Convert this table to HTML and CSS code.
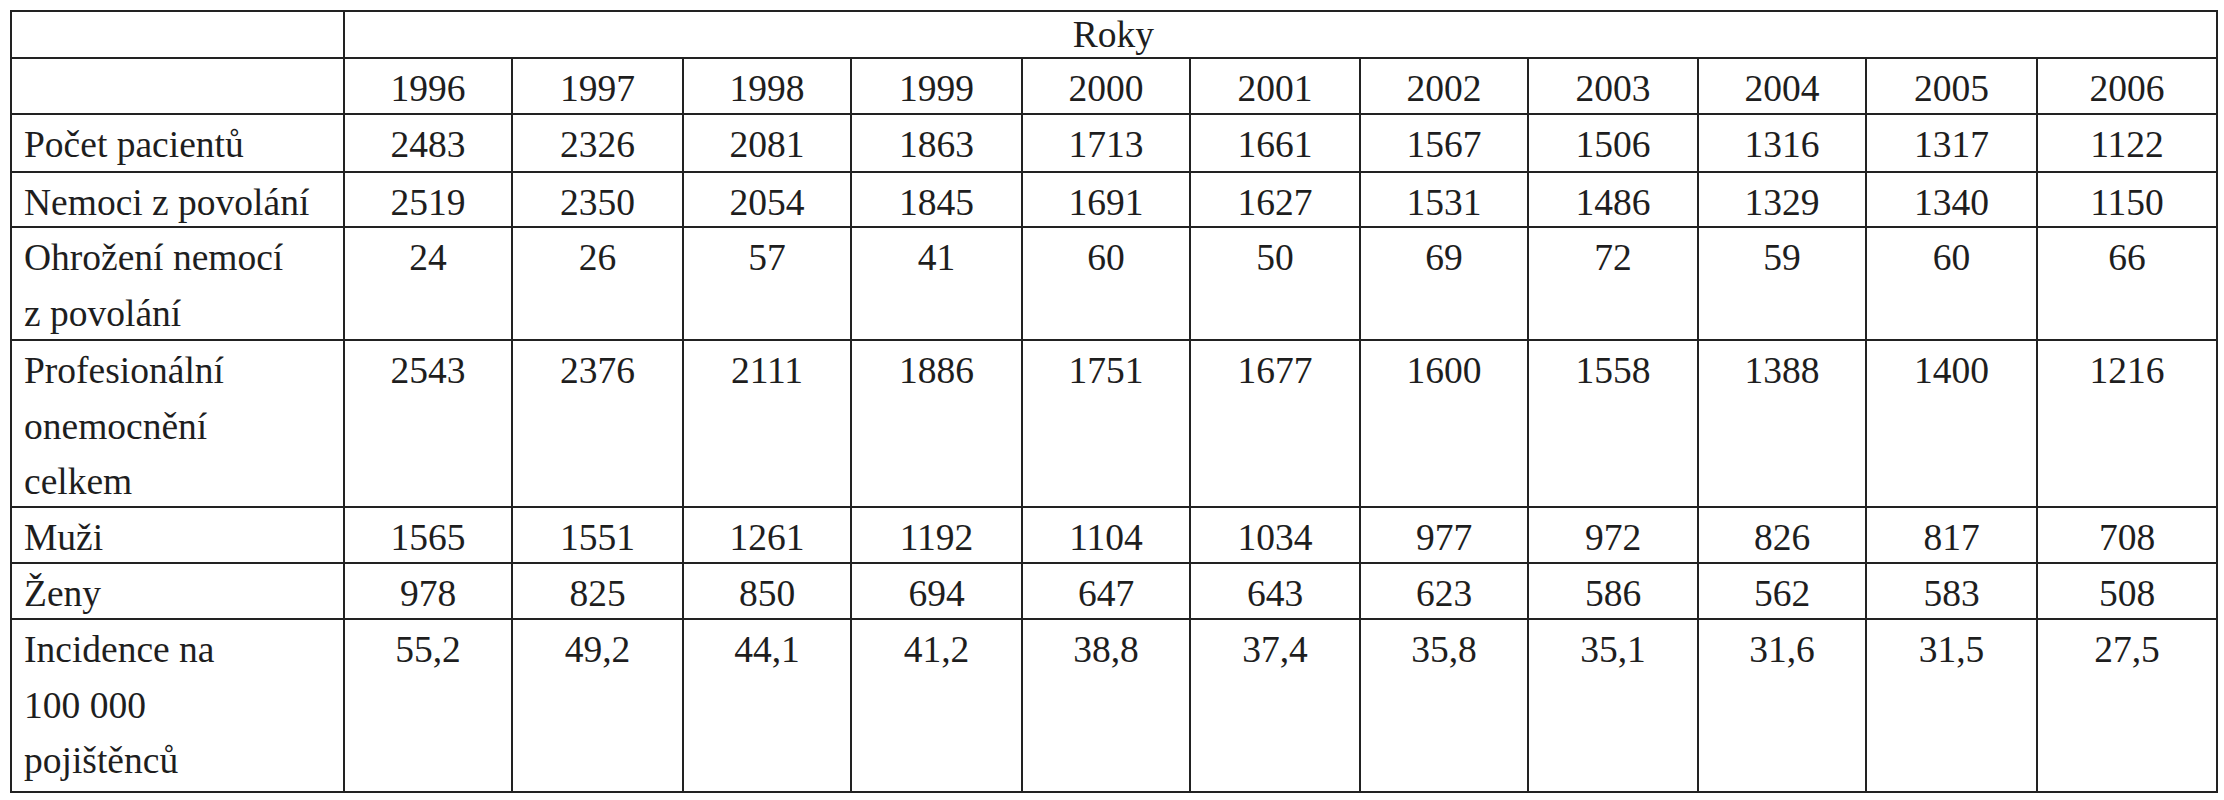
FILE: index.html
```html
<!DOCTYPE html>
<html lang="cs">
<head>
<meta charset="utf-8">
<title>Profesionální onemocnění 1996–2006</title>
<link rel="stylesheet" href="styles.css">
</head>
<body>
<div class="page">
  <div class="grid">
    <div class="cell"></div>
    <div class="cell span roky">Roky</div>

    <div class="cell"></div>
    <div class="cell num">1996</div><div class="cell num">1997</div><div class="cell num">1998</div><div class="cell num">1999</div><div class="cell num">2000</div><div class="cell num">2001</div><div class="cell num">2002</div><div class="cell num">2003</div><div class="cell num">2004</div><div class="cell num">2005</div><div class="cell num">2006</div>

    <div class="cell label">Počet pacientů</div>
    <div class="cell num">2483</div><div class="cell num">2326</div><div class="cell num">2081</div><div class="cell num">1863</div><div class="cell num">1713</div><div class="cell num">1661</div><div class="cell num">1567</div><div class="cell num">1506</div><div class="cell num">1316</div><div class="cell num">1317</div><div class="cell num">1122</div>

    <div class="cell label">Nemoci z povolání</div>
    <div class="cell num">2519</div><div class="cell num">2350</div><div class="cell num">2054</div><div class="cell num">1845</div><div class="cell num">1691</div><div class="cell num">1627</div><div class="cell num">1531</div><div class="cell num">1486</div><div class="cell num">1329</div><div class="cell num">1340</div><div class="cell num">1150</div>

    <div class="cell label">Ohrožení nemocí<br>z povolání</div>
    <div class="cell num">24</div><div class="cell num">26</div><div class="cell num">57</div><div class="cell num">41</div><div class="cell num">60</div><div class="cell num">50</div><div class="cell num">69</div><div class="cell num">72</div><div class="cell num">59</div><div class="cell num">60</div><div class="cell num">66</div>

    <div class="cell label">Profesionální<br>onemocnění<br>celkem</div>
    <div class="cell num">2543</div><div class="cell num">2376</div><div class="cell num">2111</div><div class="cell num">1886</div><div class="cell num">1751</div><div class="cell num">1677</div><div class="cell num">1600</div><div class="cell num">1558</div><div class="cell num">1388</div><div class="cell num">1400</div><div class="cell num">1216</div>

    <div class="cell label">Muži</div>
    <div class="cell num">1565</div><div class="cell num">1551</div><div class="cell num">1261</div><div class="cell num">1192</div><div class="cell num">1104</div><div class="cell num">1034</div><div class="cell num">977</div><div class="cell num">972</div><div class="cell num">826</div><div class="cell num">817</div><div class="cell num">708</div>

    <div class="cell label">Ženy</div>
    <div class="cell num">978</div><div class="cell num">825</div><div class="cell num">850</div><div class="cell num">694</div><div class="cell num">647</div><div class="cell num">643</div><div class="cell num">623</div><div class="cell num">586</div><div class="cell num">562</div><div class="cell num">583</div><div class="cell num">508</div>

    <div class="cell label">Incidence na<br>100 000<br>pojištěnců</div>
    <div class="cell num">55,2</div><div class="cell num">49,2</div><div class="cell num">44,1</div><div class="cell num">41,2</div><div class="cell num">38,8</div><div class="cell num">37,4</div><div class="cell num">35,8</div><div class="cell num">35,1</div><div class="cell num">31,6</div><div class="cell num">31,5</div><div class="cell num">27,5</div>
  </div>
</div>
</body>
</html>
```

FILE: styles.css
```css
html, body {
  margin: 0;
  padding: 0;
  background: #ffffff;
  font-family: "Liberation Serif", "Times New Roman", serif;
}

.page {
  padding: 10px 0 0 10px;
}

.grid {
  display: inline-grid;
  grid-template-columns: 331px 166px 169px 166px 169px 166px 168px 166px 168px 166px 169px 178px;
  grid-template-rows: 45px 54px 56px 53px 111px 165px 54px 54px 171px;
  gap: 2px;
  padding: 2px;
  background: #222222;
}

.cell {
  background: #ffffff;
  font-family: "Liberation Serif", "Times New Roman", serif;
  font-size: 37.5px;
  color: #1e1e1e;
  line-height: 55.5px;
  padding-top: 2px;
  white-space: nowrap;
}

.label {
  padding-left: 12px;
}

.num {
  text-align: center;
}

.span {
  grid-column: 2 / -1;
}

.roky {
  text-align: center;
  padding-top: 0;
  padding-right: 334px;
  line-height: 45px;
}
```
